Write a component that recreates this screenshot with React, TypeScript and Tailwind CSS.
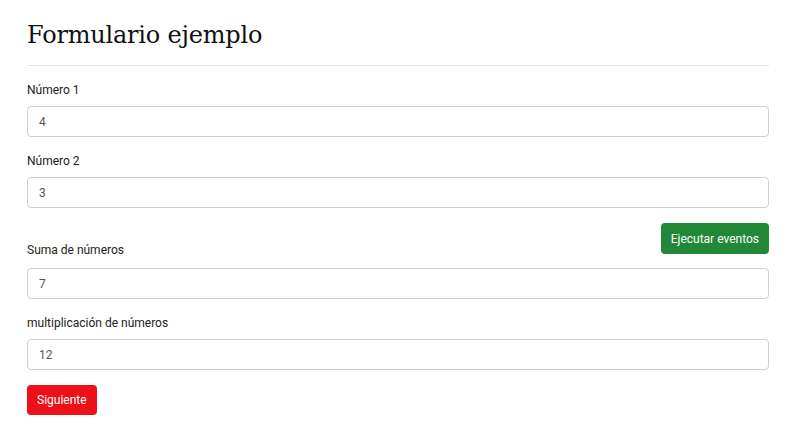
import React from 'react';

const inputCls =
  'block w-full h-[31px] rounded-[4px] border border-[#cfcfcf] bg-white px-[11px] text-[12px] text-[#555] outline-none';

function Field({ label, value, className = '' }: { label: string; value: string; className?: string }) {
  return (
    <div className={className}>
      <label className="block text-[12px] leading-4 text-[#222] mb-[8px]">{label}</label>
      <input className={inputCls} defaultValue={value} />
    </div>
  );
}

export default function App() {
  return (
    <div className="min-h-screen bg-white font-['Roboto',sans-serif]">
      <div className="px-[27px] pt-[18px] w-[796px]">
        <h1 className="font-['DejaVu_Serif',serif] text-[24px] leading-[34px] text-[#111] tracking-[-0.2px]">Formulario ejemplo</h1>
        <hr className="mt-[13px] border-t border-[#e6e6e6]" />
        <Field label="Número 1" value="4" className="mt-[16px]" />
        <Field label="Número 2" value="3" className="mt-[16px]" />
        <div className="mt-[15px] h-[35px] flex justify-between">
          <label className="self-end text-[12px] leading-4 text-[#222]">Suma de números</label>
          <button className="h-[31px] px-[10px] rounded-[4px] bg-[#218838] text-white text-[12px]">Ejecutar eventos</button>
        </div>
        <input className={inputCls + ' mt-[10px]'} defaultValue="7" />
        <Field label="multiplicación de números" value="12" className="mt-[16px]" />
        <button className="mt-[15px] h-[30px] px-[10px] rounded-[4px] bg-[#ec1019] text-white text-[12px]">Siguiente</button>
      </div>
    </div>
  );
}
